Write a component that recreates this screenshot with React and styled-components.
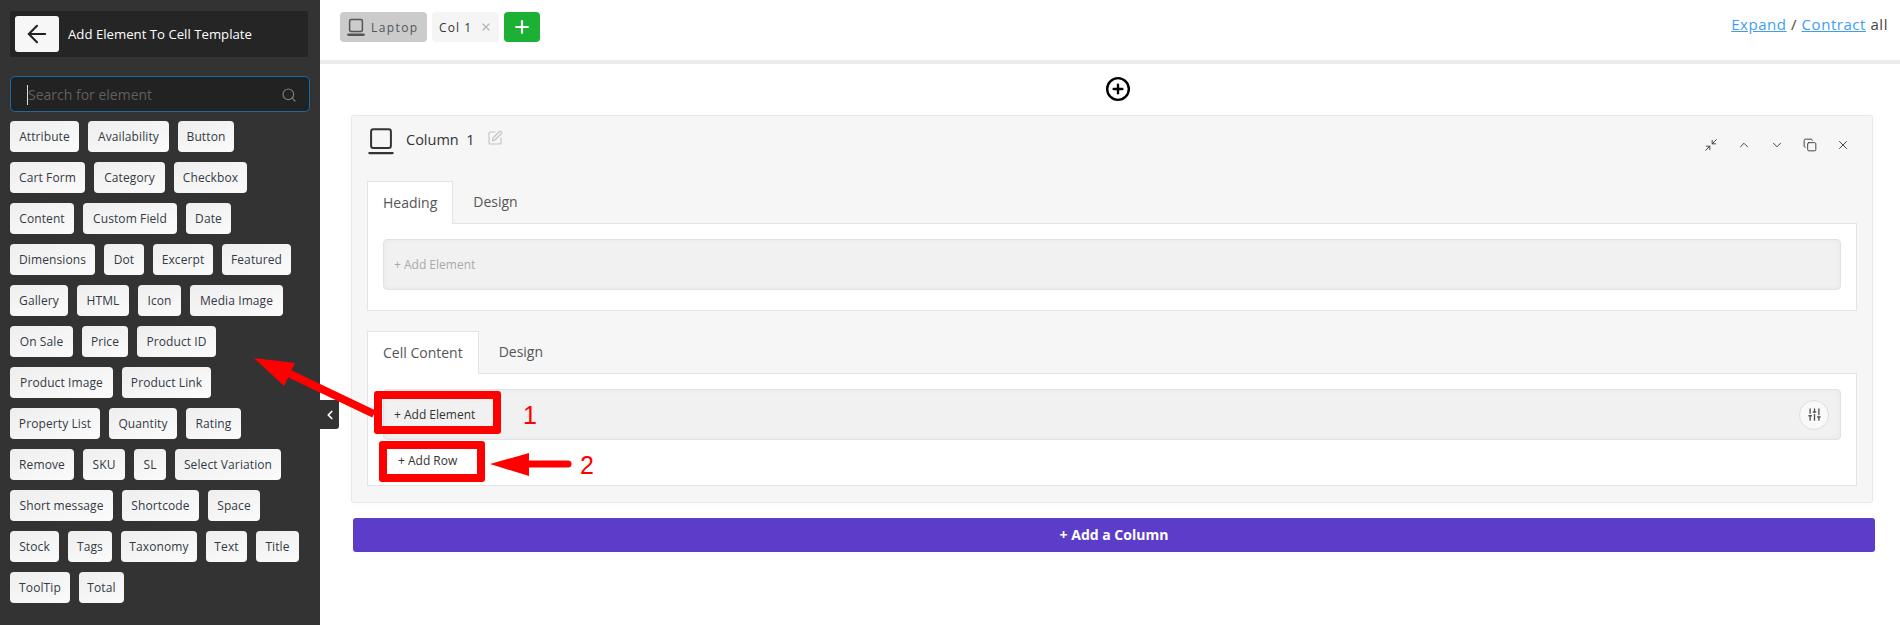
import React from "react";
import styled, { createGlobalStyle } from "styled-components";
import { ArrowLeft, Search, X, Plus, SquarePen, Minimize2, ChevronUp, ChevronDown, Copy, SlidersVertical, ChevronLeft, CirclePlus } from "lucide-react";

const Global = createGlobalStyle`
  html, body { margin: 0; padding: 0; background: #fff; }
  body { font-family: "Open Sans", "Liberation Sans", sans-serif; overflow: hidden; }
  * { box-sizing: border-box; }
`;

const Page = styled.div`
  position: relative;
  display: flex;
  width: 1900px;
  height: 625px;
  overflow: hidden;
`;

const Sidebar = styled.aside`
  position: relative;
  flex: 0 0 320px;
  height: 625px;
  background: #333333;
  padding: 11px 10px 0;
`;

const TitleBar = styled.div`
  display: flex;
  align-items: center;
  width: 298px;
  height: 46px;
  padding-left: 5px;
  background: #252525;
  color: #fff;
  font-size: 13.2px;
  font-weight: 500;
`;

const BackButton = styled.div`
  display: flex;
  align-items: center;
  justify-content: center;
  width: 44px;
  height: 36px;
  margin-right: 9px;
  border-radius: 3px;
  background: #f7f7f7;
  color: #222;
`;

const SearchBox = styled.div`
  display: flex;
  align-items: center;
  justify-content: space-between;
  width: 300px;
  height: 36px;
  margin-top: 19px;
  padding: 1px 12px 0 17px;
  border: 1px solid #1b6aa8;
  border-radius: 5px;
  background: #222222;
  color: #7c7c7c;
`;

const Placeholder = styled.span`
  border-left: 1px solid #ddd;
  color: #5f5f5f;
  font-size: 14px;
  line-height: 20px;
  margin-left: -1px;
`;

const ChipList = styled.div`
  display: flex;
  flex-direction: column;
  gap: 10px;
  margin-top: 9px;
`;

const ChipRow = styled.div`
  display: flex;
  gap: 9px;
`;

const Chip = styled.div`
  flex: 0 0 ${p => p.$w}px;
  height: 31px;
  border-radius: 4px;
  background: linear-gradient(160deg, #eeeeee, #fbfbfb);
  color: #333a45;
  font-size: 12px;
  letter-spacing: 0.1px;
  line-height: 32px;
  text-align: center;
  white-space: nowrap;
`;

const CollapseTab = styled.div`
  position: absolute;
  left: 320px;
  top: 400px;
  display: flex;
  align-items: center;
  justify-content: center;
  width: 19px;
  height: 29px;
  border-radius: 0 0 3px 0;
  background: #333333;
  color: #fff;
`;

const Main = styled.main`
  flex: 1;
  min-width: 0;
`;

const TopBar = styled.header`
  display: flex;
  align-items: flex-start;
  height: 64px;
  padding: 12px 12px 0 20px;
  border-bottom: 4px solid #ebebeb;
`;

const DeviceTab = styled.div`
  display: flex;
  align-items: center;
  gap: 6px;
  width: 87px;
  height: 30px;
  padding-left: 7px;
  border-radius: 4px;
  background: #cbcbcb;
  color: #555;
  font-size: 12px;
  letter-spacing: 1.4px;
`;

const ColTab = styled.div`
  display: flex;
  align-items: center;
  gap: 8px;
  width: 67px;
  height: 30px;
  margin-left: 5px;
  padding-left: 7px;
  border-radius: 4px;
  background: #f5f5f5;
  color: #333;
  font-size: 12px;
  letter-spacing: 1.1px;
  white-space: pre;
  svg { color: #b5b5b5; }
`;

const AddTab = styled.div`
  display: flex;
  align-items: center;
  justify-content: center;
  width: 36px;
  height: 30px;
  margin-left: 5px;
  border-radius: 4px;
  background: #1cb035;
  color: #fff;
`;

const ExpandLinks = styled.div`
  margin-left: auto;
  margin-top: 2px;
  color: #444;
  font-size: 15px;
  letter-spacing: 0.55px;
  white-space: pre;
`;

const BlueLink = styled.a`
  color: #3f9cf5;
  text-decoration: underline;
`;

const Content = styled.div`
  padding: 0 27px 0 31px;
`;

const AddAbove = styled.div`
  display: flex;
  justify-content: center;
  height: 51px;
  padding: 12px 0 0 11px;
  color: #000;
`;

const Panel = styled.section`
  height: 388px;
  padding: 0 15px;
  border: 1px solid #e8e8e8;
  border-radius: 3px;
  background: #f6f6f6;
  box-shadow: 0 0 8px rgba(0, 0, 0, 0.03);
`;

const PanelHead = styled.div`
  display: flex;
  align-items: flex-start;
  height: 65px;
  padding-top: 11px;
  color: #333;
`;

const ColumnTitle = styled.div`
  margin-left: 11px;
  margin-top: 2px;
  color: #333;
  font-size: 14.5px;
  line-height: 22px;
  white-space: pre;
`;

const EditIcon = styled.span`
  margin-left: 12px;
  margin-top: 2px;
  color: #c4c4c4;
`;

const PanelActions = styled.div`
  display: flex;
  gap: 19px;
  margin: 11px 7px 0 auto;
  color: #444;
`;

const TabRow = styled.div`
  display: flex;
  height: 42px;
  font-size: 14px;
  color: #555;
`;

const Tab = styled.div`
  position: relative;
  z-index: 1;
  height: 43px;
  padding: 0 15px;
  border: 1px solid #e4e4e4;
  border-bottom: 0;
  background: #fff;
  line-height: 42px;
`;

const PlainTab = styled.div`
  padding-left: 20px;
  line-height: 42px;
`;

const TabBody = styled.div`
  height: ${p => p.$h}px;
  margin-bottom: 20px;
  padding: 15px 15px 0;
  border: 1px solid #e4e4e4;
  background: #fff;
`;

const DropZone = styled.div`
  display: flex;
  align-items: center;
  justify-content: space-between;
  height: 51px;
  padding: 0 11px 0 10px;
  border: 1px solid #e2e2e2;
  border-radius: 4px;
  background: #f1f1f1;
  box-shadow: inset 0 0 6px rgba(0, 0, 0, 0.04);
  font-size: 12px;
  color: ${p => (p.$muted ? "#aaa" : "#333")};
`;

const RoundButton = styled.div`
  display: flex;
  align-items: center;
  justify-content: center;
  width: 30px;
  height: 30px;
  border: 1px solid #dedede;
  border-radius: 50%;
  background: #f9f9f9;
  color: #555;
`;

const AddRow = styled.div`
  margin: 12px 0 0 15px;
  font-size: 12px;
  color: #333;
`;

const AddColumn = styled.div`
  height: 34px;
  margin: 15px -2px 0 2px;
  border-radius: 3px;
  background: #5c3dc9;
  color: #fff;
  font-size: 14px;
  font-weight: 700;
  line-height: 33px;
  text-align: center;
`;

const MarkBox = styled.div`
  position: absolute;
  left: ${p => p.$x}px;
  top: ${p => p.$y}px;
  width: ${p => p.$w}px;
  height: ${p => p.$h}px;
  border: 8px solid #ff0000;
  border-radius: 3px;
`;

const MarkNumber = styled.div`
  position: absolute;
  left: ${p => p.$x}px;
  top: ${p => p.$y}px;
  color: #ff0000;
  font-family: "Liberation Sans", sans-serif;
  font-size: 25px;
  line-height: 28px;
`;

const MarkLayer = styled.svg`
  position: absolute;
  left: 0;
  top: 0;
  pointer-events: none;
`;

const LaptopIcon = ({ size = 20, strokeWidth = 2, base = 2.4 }) => (
  <svg width={size} height={size} viewBox="0 0 24 24" fill="none" stroke="currentColor" strokeWidth={strokeWidth} strokeLinecap="round" strokeLinejoin="round">
    <rect x="3.5" y="2" width="17" height="16" rx="2" />
    <path d="M2 22.3h20" strokeWidth={base} />
  </svg>
);

const rows = [
  [["Attribute", 69], ["Availability", 81], ["Button", 56]],
  [["Cart Form", 75], ["Category", 71], ["Checkbox", 73]],
  [["Content", 64], ["Custom Field", 94], ["Date", 45]],
  [["Dimensions", 85], ["Dot", 40], ["Excerpt", 60], ["Featured", 69]],
  [["Gallery", 58], ["HTML", 52], ["Icon", 43], ["Media Image", 93]],
  [["On Sale", 63], ["Price", 46], ["Product ID", 79]],
  [["Product Image", 103], ["Product Link", 89]],
  [["Property List", 90], ["Quantity", 68], ["Rating", 55]],
  [["Remove", 64], ["SKU", 42], ["SL", 32], ["Select Variation", 106]],
  [["Short message", 103], ["Shortcode", 77], ["Space", 52]],
  [["Stock", 49], ["Tags", 44], ["Taxonomy", 76], ["Text", 41], ["Title", 43]],
  [["ToolTip", 60], ["Total", 45]],
];

export default function App() {
  return (
    <Page>
      <Global />
      <Sidebar>
        <TitleBar>
          <BackButton><ArrowLeft size={28} strokeWidth={1.8} /></BackButton>
          Add Element To Cell Template
        </TitleBar>
        <SearchBox>
          <Placeholder>Search for element</Placeholder>
          <Search size={16} strokeWidth={1.8} />
        </SearchBox>
        <ChipList>
          {rows.map((r, i) => (
            <ChipRow key={i}>
              {r.map(([label, w]) => <Chip key={label} $w={w}>{label}</Chip>)}
            </ChipRow>
          ))}
        </ChipList>
      </Sidebar>
      <CollapseTab><ChevronLeft size={14} strokeWidth={3} /></CollapseTab>
      <Main>
        <TopBar>
          <DeviceTab><LaptopIcon size={18} strokeWidth={2} base={3.4} />Laptop</DeviceTab>
          <ColTab>Col 1<X size={12} strokeWidth={2.5} /></ColTab>
          <AddTab><Plus size={20} strokeWidth={2.6} /></AddTab>
          <ExpandLinks><BlueLink>Expand</BlueLink> / <BlueLink>Contract</BlueLink> all</ExpandLinks>
        </TopBar>
        <Content>
          <AddAbove><CirclePlus size={26} strokeWidth={2.2} /></AddAbove>
          <Panel>
            <PanelHead>
              <LaptopIcon size={28} strokeWidth={1.7} base={1.9} />
              <ColumnTitle>Column  1</ColumnTitle>
              <EditIcon><SquarePen size={16} strokeWidth={1.7} /></EditIcon>
              <PanelActions>
                <Minimize2 size={14} strokeWidth={1.7} /><ChevronUp size={14} strokeWidth={1.7} /><ChevronDown size={14} strokeWidth={1.7} /><Copy size={14} strokeWidth={1.7} /><X size={14} strokeWidth={1.7} />
              </PanelActions>
            </PanelHead>
            <TabRow>
              <Tab>Heading</Tab>
              <PlainTab>Design</PlainTab>
            </TabRow>
            <TabBody $h={88}>
              <DropZone $muted>+ Add Element</DropZone>
            </TabBody>
            <TabRow>
              <Tab>Cell Content</Tab>
              <PlainTab>Design</PlainTab>
            </TabRow>
            <TabBody $h={113}>
              <DropZone>
                + Add Element
                <RoundButton><SlidersVertical size={15} strokeWidth={2.2} /></RoundButton>
              </DropZone>
              <AddRow>+ Add Row</AddRow>
            </TabBody>
          </Panel>
          <AddColumn>+ Add a Column</AddColumn>
        </Content>
      </Main>
      <MarkBox $x={374} $y={391} $w={127} $h={43} />
      <MarkBox $x={379} $y={441} $w={106} $h={41} />
      <MarkNumber $x={523} $y={401}>1</MarkNumber>
      <MarkNumber $x={580} $y={451}>2</MarkNumber>
      <MarkLayer width="1900" height="625" viewBox="0 0 1900 625">
        <path d="M374 414L288 373" stroke="#f00" strokeWidth="8" />
        <path d="M254 358L295 363L284 386Z" fill="#f00" />
        <path d="M525 464H568" stroke="#f00" strokeWidth="7" strokeLinecap="round" />
        <path d="M490 464L529 453V476Z" fill="#f00" />
      </MarkLayer>
    </Page>
  );
}
